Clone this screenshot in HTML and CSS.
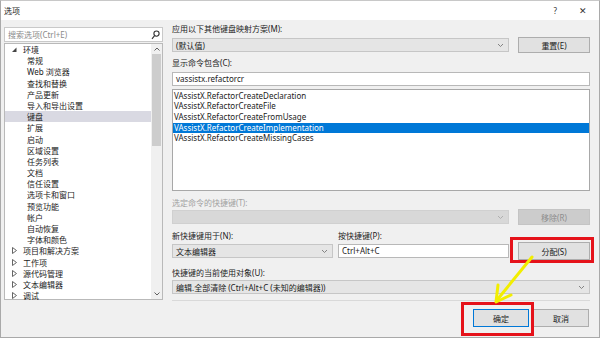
FILE: index.html
```html
<!DOCTYPE html>
<html lang="zh-CN">
<head>
    <meta charset="UTF-8">
    <title>选项</title>
    <link rel="stylesheet" href="styles.css">
</head>
<body>
    <div class="dialog">
        <!-- Title bar -->
        <header class="titlebar">
            <span class="title">选项</span>
            <span class="title-btns">
                <span class="help">?</span>
                <span class="close">✕</span>
            </span>
        </header>

        <div class="content">
            <!-- Left: search + tree -->
            <aside class="left-col">
                <div class="search">
                    <span class="search-hint">搜索选项(Ctrl+E)</span>
                    <svg class="search-icon" width="9" height="10" viewBox="0 0 9 10" fill="none" stroke="#333" stroke-width="1.1">
                        <circle cx="5.5" cy="3.6" r="2.6"></circle>
                        <line x1="3.6" y1="5.6" x2="1" y2="8.8"></line>
                    </svg>
                </div>
                <div class="tree">
                    <ul class="tree-list">
                        <li class="node open">
                            <svg class="twisty" width="6" height="6" viewBox="0 0 6 6"><polygon points="5,0.5 5,5 0.5,5" fill="#444"></polygon></svg>环境
                        </li>
                        <li class="leaf">常规</li>
                        <li class="leaf">Web 浏览器</li>
                        <li class="leaf">查找和替换</li>
                        <li class="leaf">产品更新</li>
                        <li class="leaf">导入和导出设置</li>
                        <li class="leaf selected">键盘</li>
                        <li class="leaf">扩展</li>
                        <li class="leaf">启动</li>
                        <li class="leaf">区域设置</li>
                        <li class="leaf">任务列表</li>
                        <li class="leaf">文档</li>
                        <li class="leaf">信任设置</li>
                        <li class="leaf">选项卡和窗口</li>
                        <li class="leaf">预览功能</li>
                        <li class="leaf">帐户</li>
                        <li class="leaf">自动恢复</li>
                        <li class="leaf">字体和颜色</li>
                        <li class="node">
                            <svg class="twisty" width="6" height="7" viewBox="0 0 6 7"><polygon points="1,0.5 5,3.5 1,6.5" fill="none" stroke="#555" stroke-width="0.9"></polygon></svg>项目和解决方案
                        </li>
                        <li class="node">
                            <svg class="twisty" width="6" height="7" viewBox="0 0 6 7"><polygon points="1,0.5 5,3.5 1,6.5" fill="none" stroke="#555" stroke-width="0.9"></polygon></svg>工作项
                        </li>
                        <li class="node">
                            <svg class="twisty" width="6" height="7" viewBox="0 0 6 7"><polygon points="1,0.5 5,3.5 1,6.5" fill="none" stroke="#555" stroke-width="0.9"></polygon></svg>源代码管理
                        </li>
                        <li class="node">
                            <svg class="twisty" width="6" height="7" viewBox="0 0 6 7"><polygon points="1,0.5 5,3.5 1,6.5" fill="none" stroke="#555" stroke-width="0.9"></polygon></svg>文本编辑器
                        </li>
                        <li class="node">
                            <svg class="twisty" width="6" height="7" viewBox="0 0 6 7"><polygon points="1,0.5 5,3.5 1,6.5" fill="none" stroke="#555" stroke-width="0.9"></polygon></svg>调试
                        </li>
                    </ul>
                    <div class="scrollbar">
                        <svg class="sb-arrow" width="8" height="6" viewBox="0 0 8 6" fill="none" stroke="#606060" stroke-width="1"><polyline points="1.5,4.5 4,2 6.5,4.5"></polyline></svg>
                        <div class="sb-track"><div class="sb-thumb"></div></div>
                        <svg class="sb-arrow" width="8" height="6" viewBox="0 0 8 6" fill="none" stroke="#606060" stroke-width="1"><polyline points="1.5,1.5 4,4 6.5,1.5"></polyline></svg>
                    </div>
                </div>
            </aside>

            <!-- Right: keyboard settings -->
            <section class="right-col">
                <div class="label">应用以下其他键盘映射方案(M):</div>
                <div class="row row-a">
                    <div class="combo grow">
                        <span>(默认值)</span>
                        <svg class="chev" width="7" height="5" viewBox="0 0 7 5" fill="none" stroke="#777" stroke-width="0.9"><polyline points="1,1 3.5,3.5 6,1"></polyline></svg>
                    </div>
                    <button class="btn side">重置(E)</button>
                </div>

                <div class="label label-b">显示命令包含(C):</div>
                <div class="textbox filter">vassistx.refactorcr</div>

                <ul class="cmd-list">
                    <li>VAssistX.RefactorCreateDeclaration</li>
                    <li>VAssistX.RefactorCreateFile</li>
                    <li>VAssistX.RefactorCreateFromUsage</li>
                    <li class="selected">VAssistX.RefactorCreateImplementation</li>
                    <li>VAssistX.RefactorCreateMissingCases</li>
                </ul>

                <div class="label label-c disabled">选定命令的快捷键(T):</div>
                <div class="row row-c">
                    <div class="combo grow off">
                        <span></span>
                        <svg class="chev" width="7" height="5" viewBox="0 0 7 5" fill="none" stroke="#aaa" stroke-width="0.9"><polyline points="1,1 3.5,3.5 6,1"></polyline></svg>
                    </div>
                    <button class="btn side off">移除(R)</button>
                </div>

                <div class="row labels-d">
                    <div class="label scope-col">新快捷键用于(N):</div>
                    <div class="label">按快捷键(P):</div>
                </div>
                <div class="row row-d">
                    <div class="combo scope-col">
                        <span>文本编辑器</span>
                        <svg class="chev" width="7" height="5" viewBox="0 0 7 5" fill="none" stroke="#777" stroke-width="0.9"><polyline points="1,1 3.5,3.5 6,1"></polyline></svg>
                    </div>
                    <div class="textbox keys">Ctrl+Alt+C</div>
                    <button class="btn side assign">分配(S)</button>
                </div>

                <div class="label label-e">快捷键的当前使用对象(U):</div>
                <div class="combo used-by">
                    <span>编辑.全部清除 (Ctrl+Alt+C (未知的编辑器))</span>
                    <svg class="chev" width="7" height="5" viewBox="0 0 7 5" fill="none" stroke="#777" stroke-width="0.9"><polyline points="1,1 3.5,3.5 6,1"></polyline></svg>
                </div>

                <div class="separator"></div>
            </section>
        </div>

        <!-- Footer buttons -->
        <footer class="footer">
            <button class="btn footer-btn default">确定</button>
            <button class="btn footer-btn">取消</button>
        </footer>

        <!-- Annotations drawn over the dialog -->
        <div class="mark mark-assign"></div>
        <div class="mark mark-ok"></div>
        <svg class="arrow" width="600" height="338" viewBox="0 0 600 338">
            <line x1="532" y1="257" x2="497" y2="300" stroke="#f2ee00" stroke-width="3" stroke-linecap="round"></line>
            <polyline points="498,285 496,302 511,295" fill="none" stroke="#f2ee00" stroke-width="3" stroke-linecap="round" stroke-linejoin="round"></polyline>
        </svg>
    </div>
</body>
</html>
```

FILE: styles.css
```css
* {
    box-sizing: border-box;
}

body {
    margin: 0;
    background: #f0f0f0;
    font-family: "Noto Sans", "Noto Sans CJK SC", sans-serif;
    font-size: 8px;
    color: #1b1b1b;
}

ul {
    list-style: none;
    margin: 0;
    padding: 0;
}

button {
    font-family: inherit;
    font-size: inherit;
    color: inherit;
    padding: 0;
}

/* Dialog frame */
.dialog {
    position: relative;
    width: 600px;
    height: 338px;
    background: #f0f0f0;
    border: 1px solid #a9a9a9;
    border-top-color: #c8c8c8;
    overflow: hidden;
}

.titlebar {
    height: 19px;
    background: #ffffff;
    display: flex;
    align-items: center;
    justify-content: space-between;
    padding: 0 12px 0 3px;
}

.title {
    font-size: 8px;
}

.title-btns {
    display: flex;
    align-items: center;
    gap: 22px;
    color: #333;
}

.help {
    font-size: 8px;
}

.close {
    font-size: 9px;
}

/* Main body */
.content {
    display: flex;
    gap: 9px;
    padding: 3px 9px 0 3px;
}

.left-col {
    width: 159px;
    flex-shrink: 0;
    padding-top: 4px;
}

.search {
    height: 15px;
    background: #ffffff;
    border: 1px solid #c9c9c9;
    display: flex;
    align-items: center;
    justify-content: space-between;
    padding: 0 2px 0 3px;
}

.search-hint {
    color: #8a8a8a;
}

.tree {
    margin-top: 1px;
    height: 257px;
    background: #ffffff;
    border: 1px solid #b9b9b9;
    display: flex;
}

.tree-list {
    flex: 1;
    padding-top: 0;
}

.tree-list li {
    height: 11.2px;
    line-height: 11.2px;
    white-space: nowrap;
    display: flex;
    align-items: center;
}

.tree-list .node {
    padding-left: 6px;
}

.tree-list .leaf {
    padding-left: 22px;
}

.tree-list .selected {
    background: #d9d9e2;
}

.twisty {
    width: 7px;
    margin-right: 5px;
    flex-shrink: 0;
}

.scrollbar {
    width: 11px;
    background: #f0f0f0;
    display: flex;
    flex-direction: column;
    align-items: center;
    padding: 2px 0;
}

.sb-arrow {
    flex-shrink: 0;
}

.sb-track {
    flex: 1;
    width: 100%;
    padding: 2px 1px;
}

.sb-thumb {
    height: 92px;
    background: #cdcdcd;
}

/* Right column */
.right-col {
    width: 418px;
    display: flex;
    flex-direction: column;
}

.label {
    height: 12px;
    line-height: 12px;
    white-space: nowrap;
}

.label.disabled {
    color: #a0a0a0;
}

.row {
    display: flex;
    align-items: center;
    gap: 5px;
}

.row-a {
    margin-top: 2px;
    height: 16px;
}

.grow {
    flex: 1;
}

.combo {
    height: 14px;
    background: #e5e5e5;
    border: 1px solid #c6c6c6;
    display: flex;
    align-items: center;
    justify-content: space-between;
    padding: 0 4px 0 3px;
    white-space: nowrap;
}

.combo.off {
    background: #d8d8d8;
    border-color: #d0d0d0;
}

.chev {
    flex-shrink: 0;
}

.btn {
    background: #e1e1e1;
    border: 1px solid #adadad;
    height: 16px;
}

.btn.side {
    width: 72px;
    margin-left: 4px;
}

.btn.off {
    background: #cccccc;
    border-color: #c4c4c4;
    color: #8d8d8d;
}

.label-b {
    margin-top: 4px;
}

.textbox {
    height: 14px;
    line-height: 12px;
    background: #ffffff;
    border: 1px solid #b8b8b8;
    padding: 0 3px;
    white-space: nowrap;
}

.filter {
    margin-top: 3px;
}

.cmd-list {
    margin-top: 3px;
    height: 102px;
    background: #ffffff;
    border: 1px solid #a8a8a8;
    padding-top: 0.6px;
}

.cmd-list li {
    height: 10.7px;
    line-height: 10.7px;
    padding-left: 1px;
}

.cmd-list .selected {
    background: #0078d7;
    color: #ffffff;
}

.label-c {
    margin-top: 6px;
}

.row-c {
    height: 16px;
}

.labels-d {
    margin-top: 5px;
}

.scope-col {
    width: 161px;
    flex-shrink: 0;
}

.row-d {
    height: 18px;
}

.keys {
    flex: 1;
}

.assign {
    height: 18px;
}

.label-e {
    margin-top: 7px;
}

.used-by {
    margin-top: 1px;
}

.separator {
    margin-top: 6px;
    height: 1px;
    background: #d9d9d9;
}

/* Footer */
.footer {
    display: flex;
    justify-content: flex-end;
    gap: 4px;
    padding: 8px 10px 0 0;
}

.footer-btn {
    width: 56px;
    height: 18px;
}

.footer-btn.default {
    border-color: #0078d7;
}

/* Red annotation boxes and arrow */
.mark {
    position: absolute;
    border: 3px solid #e5121a;
}

.mark-assign {
    left: 509px;
    top: 236px;
    width: 84px;
    height: 26px;
}

.mark-ok {
    left: 460px;
    top: 301px;
    width: 73px;
    height: 34px;
}

.arrow {
    position: absolute;
    left: -1px;
    top: -1px;
    pointer-events: none;
}
```
